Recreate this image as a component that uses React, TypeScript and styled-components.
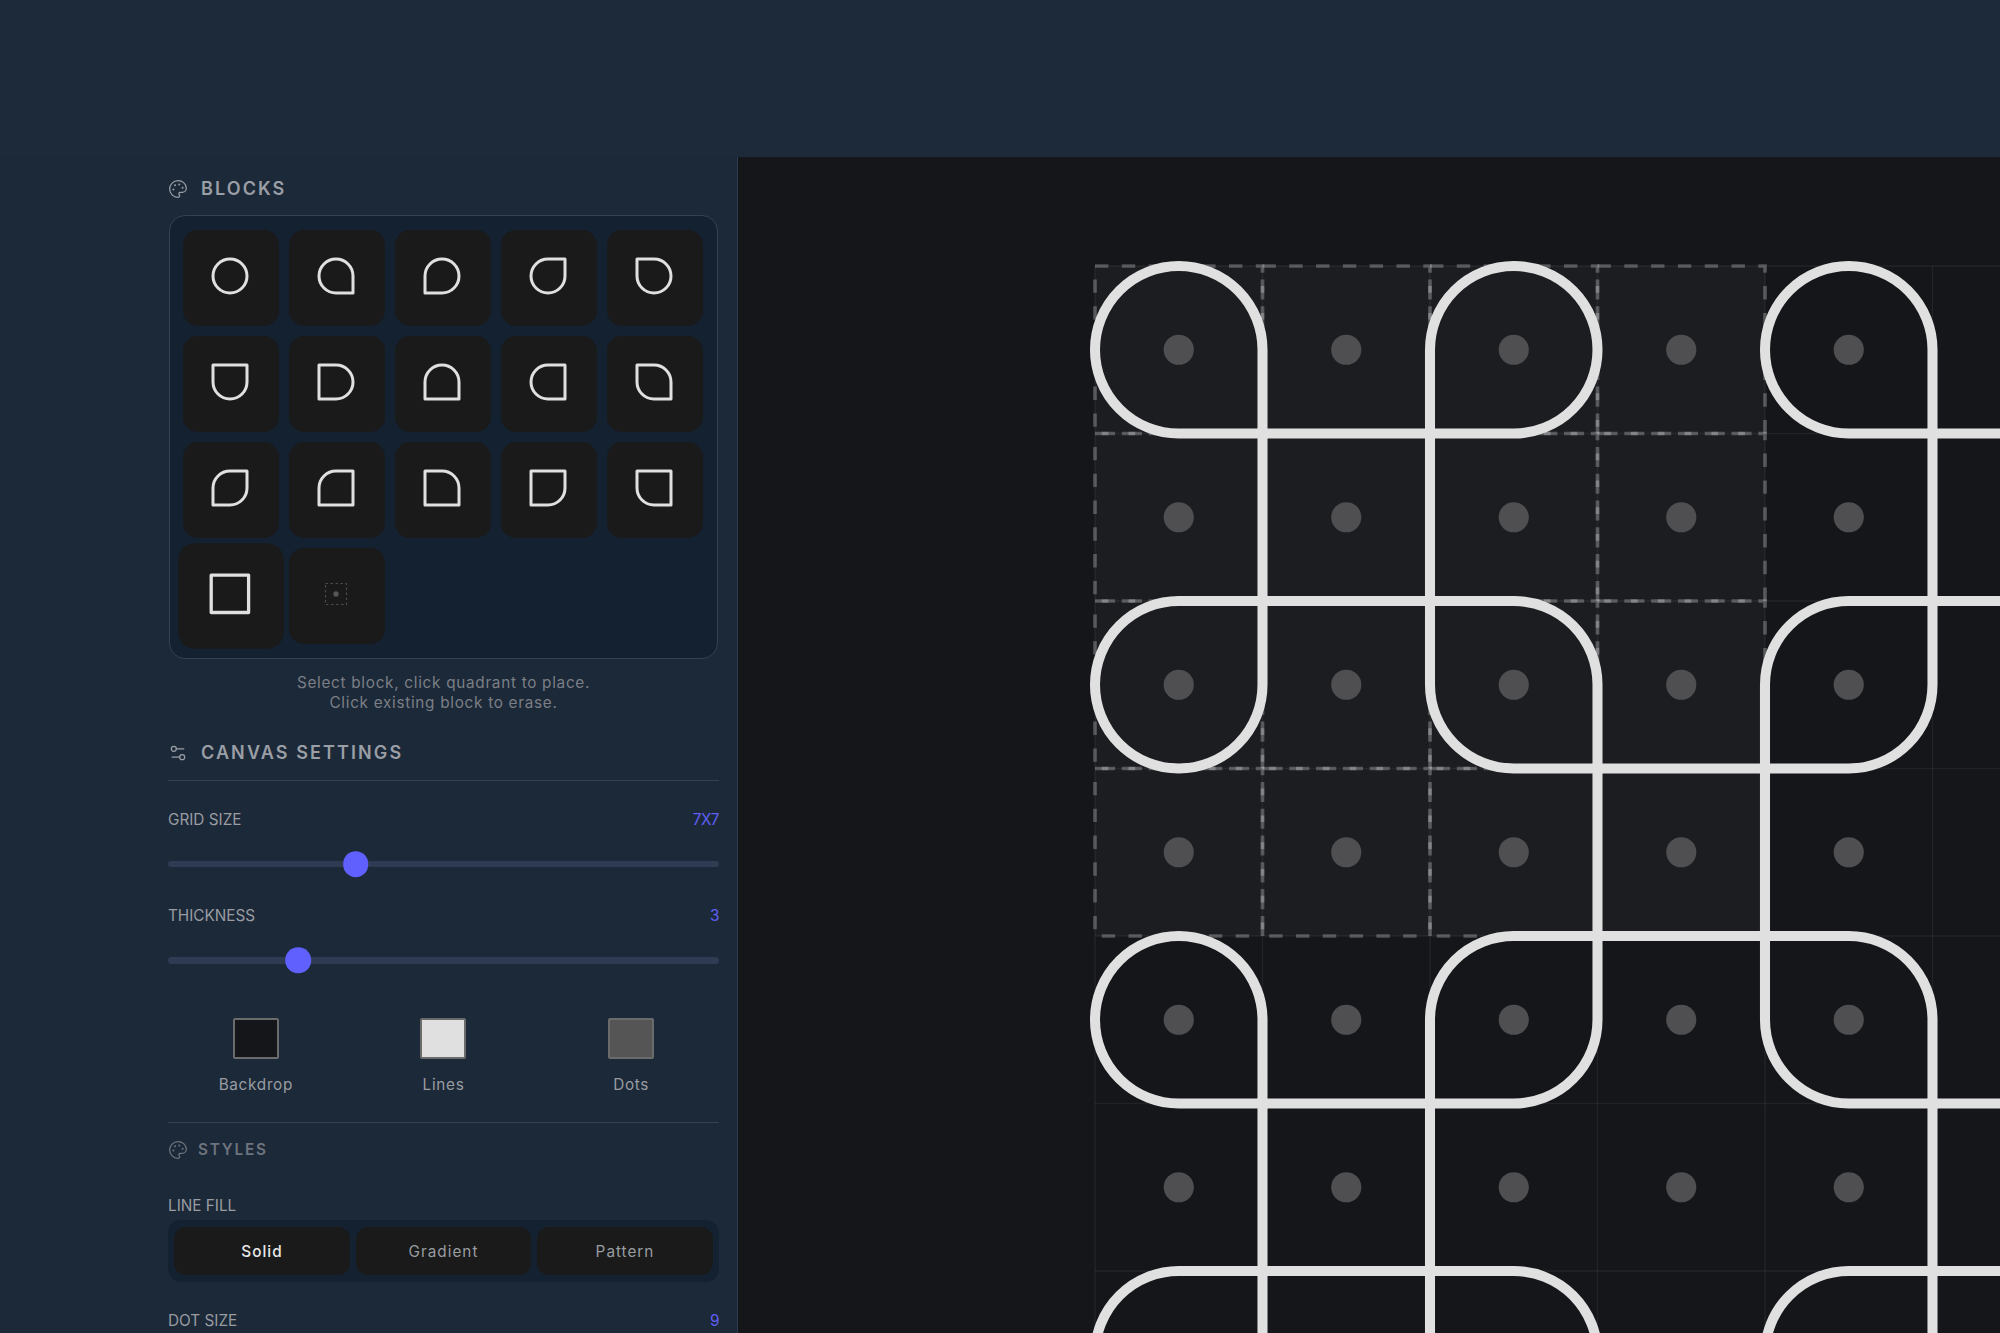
import React from 'react';
import styled, { createGlobalStyle } from 'styled-components';
import { Palette, Settings2 } from 'lucide-react';

// corners are written as top-left, top-right, bottom-right, bottom-left
const paletteShapes = [
  '1111', '1101', '1110', '1011', '0111',
  '0011', '0110', '1100', '1001', '0101',
  '1010', '1000', '0100', '0010', '0001',
];

const placedBlocks = [
  { col: 0, row: 0, corners: '1101' },
  { col: 2, row: 0, corners: '1110' },
  { col: 4, row: 0, corners: '1101' },
  { col: 1, row: 1, corners: '0000' },
  { col: 5, row: 1, corners: '0000' },
  { col: 0, row: 2, corners: '1011' },
  { col: 2, row: 2, corners: '0101' },
  { col: 4, row: 2, corners: '1010' },
  { col: 3, row: 3, corners: '0000' },
  { col: 0, row: 4, corners: '1101' },
  { col: 2, row: 4, corners: '1010' },
  { col: 4, row: 4, corners: '0101' },
  { col: 1, row: 5, corners: '0000' },
  { col: 5, row: 5, corners: '0000' },
  { col: 0, row: 6, corners: '1011' },
  { col: 2, row: 6, corners: '0101' },
  { col: 4, row: 6, corners: '1010' },
];

const GRID = 7;
const UNIT = 10;
const range = (n: number) => Array.from({ length: n }, (_, i) => i);

function cornerPath(x: number, y: number, s: number, corners: string) {
  const r = s / 2;
  const [tl, tr, br, bl] = corners.split('').map((c) => c === '1');
  return [
    `M${x + (tl ? r : 0)} ${y}`,
    `H${x + s - (tr ? r : 0)}`,
    tr ? `A${r} ${r} 0 0 1 ${x + s} ${y + r}` : '',
    `V${y + s - (br ? r : 0)}`,
    br ? `A${r} ${r} 0 0 1 ${x + s - r} ${y + s}` : '',
    `H${x + (bl ? r : 0)}`,
    bl ? `A${r} ${r} 0 0 1 ${x} ${y + s - r}` : '',
    `V${y + (tl ? r : 0)}`,
    tl ? `A${r} ${r} 0 0 1 ${x + r} ${y}` : '',
    'Z',
  ].join(' ');
}

const GlobalStyle = createGlobalStyle`
  html, body {
    margin: 0;
    height: 1333px;
    overflow: hidden;
    background: #1c2a3a;
    font-family: Inter, "Liberation Sans", sans-serif;
  }
`;

const Page = styled.div`
  display: flex;
  flex-direction: column;
  height: 1333px;
`;

const TopBar = styled.div`
  height: 157px;
  flex-shrink: 0;
  background: #1c2a3a;
`;

const Main = styled.div`
  display: flex;
  flex: 1;
  min-height: 0;
`;

const Sidebar = styled.aside`
  width: 738px;
  box-sizing: border-box;
  flex-shrink: 0;
  padding: 22px 18px 0 168px;
  background: #1c2939;
  border-right: 1.5px solid #2b3a4e;
  overflow: hidden;
`;

const SectionHead = styled.div<{ $ruled?: boolean; $spaced?: boolean }>`
  display: flex;
  align-items: center;
  gap: 13px;
  height: 20px;
  color: #9a9ea5;
  margin-top: ${({ $spaced }) => ($spaced ? '29px' : 0)};
  padding-bottom: ${({ $ruled }) => ($ruled ? '17px' : 0)};
  border-bottom: ${({ $ruled }) => ($ruled ? '1.3px solid #334155' : 'none')};
  svg {
    flex-shrink: 0;
  }
`;

const SectionTitle = styled.h2`
  margin: 0;
  font-size: 18px;
  line-height: 20px;
  font-weight: 600;
  letter-spacing: 2.1px;
  text-transform: uppercase;
`;

const MinorHead = styled.div`
  display: flex;
  align-items: center;
  gap: 10px;
  height: 20px;
  margin-top: 17px;
  color: #6e747d;
`;

const MinorTitle = styled.h3`
  margin: 0;
  font-size: 15.3px;
  line-height: 20px;
  font-weight: 600;
  letter-spacing: 1.8px;
  text-transform: uppercase;
`;

const BlockPanel = styled.div`
  margin: 16px 1.5px 0 0.5px;
  box-sizing: border-box;
  height: 444px;
  padding: 14px 13.5px;
  border: 1.3px solid #334155;
  border-radius: 16px;
  background: #142130;
`;

const BlockGrid = styled.div`
  display: grid;
  grid-template-columns: repeat(5, 96px);
  grid-auto-rows: 96px;
  gap: 10.1px;
`;

const BlockCell = styled.button<{ $selected?: boolean }>`
  display: flex;
  align-items: center;
  justify-content: center;
  padding: 0 3px 5px 0;
  border: none;
  border-radius: 15px;
  background: #1a1a1a;
  transform: ${({ $selected }) => ($selected ? 'scale(1.1)' : 'none')};
`;

const Hint = styled.p`
  margin: 14px 0 0;
  font-size: 15.3px;
  line-height: 20.4px;
  letter-spacing: 0.71px;
  text-align: center;
  color: #7b7f85;
`;

const FieldRow = styled.div<{ $gap?: string }>`
  display: flex;
  justify-content: space-between;
  margin-top: ${({ $gap }) => $gap ?? '29px'};
  font-size: 15.3px;
  line-height: 20.4px;
  text-transform: uppercase;
`;

const FieldLabel = styled.span`
  color: #999ca1;
`;

const FieldValue = styled.span`
  color: #6060f5;
  letter-spacing: -0.5px;
`;

const Slider = styled.div`
  position: relative;
  height: 6.4px;
  margin: 30.6px 0 9.6px;
  border-radius: 4px;
  background: #2f3b52;
`;

const Thumb = styled.span`
  position: absolute;
  top: 50%;
  width: 25.6px;
  height: 25.6px;
  border-radius: 50%;
  background: #6060ff;
  transform: translate(-50%, -50%);
`;

const Swatches = styled.div`
  display: grid;
  grid-template-columns: repeat(3, 1fr);
  gap: 12px;
  margin-top: 54px;
`;

const SwatchItem = styled.div`
  display: flex;
  flex-direction: column;
  align-items: center;
  gap: 16px;
  font-size: 15.3px;
  line-height: 20.4px;
  letter-spacing: 0.7px;
  color: #999ca1;
`;

const Swatch = styled.span<{ $color: string }>`
  box-sizing: border-box;
  width: 46px;
  height: 41px;
  border: 2.5px solid #6b6b6b;
  border-radius: 2px;
  background: ${({ $color }) => $color};
`;

const Divider = styled.hr`
  margin: 27px 0 0;
  border: none;
  border-top: 1.3px solid #334155;
`;

const Segmented = styled.div`
  display: grid;
  grid-template-columns: repeat(3, 1fr);
  gap: 6.4px;
  margin-top: 4px;
  padding: 6.4px;
  border-radius: 13px;
  background: #142130;
`;

const Segment = styled.button<{ $active?: boolean }>`
  height: 48.5px;
  border: none;
  border-radius: 12px;
  background: #1a1a1a;
  font-family: inherit;
  font-size: 15.3px;
  letter-spacing: 1px;
  font-weight: ${({ $active }) => ($active ? 500 : 400)};
  color: ${({ $active }) => ($active ? '#e8e8e8' : '#999ca1')};
`;

const Canvas = styled.main`
  flex: 1;
  min-width: 0;
  padding: 109.3px 0 0 356.6px;
  background: #14161a;
  overflow: hidden;
`;

const Board = styled.svg`
  display: block;
  width: 1172.5px;
  height: 1172.5px;
  overflow: visible;
`;

function BlockIcon({ corners }: { corners: string }) {
  return (
    <svg width="40" height="40" viewBox="0 0 40 40" fill="none">
      <path d={cornerPath(3, 3, 34, corners)} stroke="#e0e0e0" strokeWidth="3" strokeLinejoin="round" />
    </svg>
  );
}

function EmptyIcon() {
  return (
    <svg width="40" height="40" viewBox="0 0 40 40" fill="none">
      <rect x="9.5" y="9.5" width="21" height="21" stroke="#4a4a4a" strokeWidth="1.2" strokeDasharray="2.5 2.5" />
      <circle cx="20" cy="20" r="2.7" fill="#555" />
    </svg>
  );
}

function PatternBoard() {
  return (
    <Board viewBox={`0 0 ${GRID * UNIT} ${GRID * UNIT}`} fill="none">
      {range(GRID + 1).map((i) => (
        <g key={i} stroke="rgba(255,255,255,0.06)" strokeWidth="0.08">
          <line x1={i * UNIT} y1="0" x2={i * UNIT} y2={GRID * UNIT} />
          <line x1="0" y1={i * UNIT} x2={GRID * UNIT} y2={i * UNIT} />
        </g>
      ))}
      {range(4).map((row) =>
        range(4).map((col) => (
          <rect
            key={`${col}-${row}`}
            x={col * UNIT}
            y={row * UNIT}
            width={UNIT}
            height={UNIT}
            fill="rgba(255,255,255,0.03)"
            stroke="rgba(255,255,255,0.25)"
            strokeWidth="0.22"
            strokeDasharray="0.8 0.8"
          />
        )),
      )}
      {range(GRID).map((row) =>
        range(GRID).map((col) => (
          <circle key={`${col}-${row}`} cx={(col + 0.5) * UNIT} cy={(row + 0.5) * UNIT} r="0.9" fill="#4f4f51" />
        )),
      )}
      {placedBlocks.map(({ col, row, corners }) => (
        <path
          key={`${col}-${row}`}
          d={cornerPath(col * UNIT, row * UNIT, UNIT, corners)}
          stroke="#e0e0e0"
          strokeWidth="0.6"
        />
      ))}
    </Board>
  );
}

function SliderField({ label, value, percent, gap }: { label: string; value: string; percent: number; gap?: string }) {
  return (
    <>
      <FieldRow $gap={gap}>
        <FieldLabel>{label}</FieldLabel>
        <FieldValue>{value}</FieldValue>
      </FieldRow>
      <Slider>
        <Thumb style={{ left: `${percent}%` }} />
      </Slider>
    </>
  );
}

export default function App() {
  return (
    <Page>
      <GlobalStyle />
      <TopBar />
      <Main>
        <Sidebar>
          <SectionHead>
            <Palette size={20} strokeWidth={1.5} />
            <SectionTitle>Blocks</SectionTitle>
          </SectionHead>
          <BlockPanel>
            <BlockGrid>
              {paletteShapes.map((corners) => (
                <BlockCell key={corners}>
                  <BlockIcon corners={corners} />
                </BlockCell>
              ))}
              <BlockCell $selected>
                <BlockIcon corners="0000" />
              </BlockCell>
              <BlockCell>
                <EmptyIcon />
              </BlockCell>
            </BlockGrid>
          </BlockPanel>
          <Hint>
            Select block, click quadrant to place.
            <br />
            Click existing block to erase.
          </Hint>

          <SectionHead $ruled $spaced>
            <Settings2 size={20} strokeWidth={1.5} />
            <SectionTitle>Canvas Settings</SectionTitle>
          </SectionHead>
          <SliderField label="Grid Size" value="7X7" percent={34.1} />
          <SliderField label="Thickness" value="3" percent={23.6} gap="39px" />
          <Swatches>
            <SwatchItem>
              <Swatch $color="#14161a" />
              Backdrop
            </SwatchItem>
            <SwatchItem>
              <Swatch $color="#e0e0e0" />
              Lines
            </SwatchItem>
            <SwatchItem>
              <Swatch $color="#555555" />
              Dots
            </SwatchItem>
          </Swatches>
          <Divider />

          <MinorHead>
            <Palette size={20} strokeWidth={1.5} />
            <MinorTitle>Styles</MinorTitle>
          </MinorHead>
          <FieldRow $gap="36px">
            <FieldLabel>Line Fill</FieldLabel>
          </FieldRow>
          <Segmented>
            <Segment $active>Solid</Segment>
            <Segment>Gradient</Segment>
            <Segment>Pattern</Segment>
          </Segmented>
          <FieldRow>
            <FieldLabel>Dot Size</FieldLabel>
            <FieldValue>9</FieldValue>
          </FieldRow>
        </Sidebar>
        <Canvas>
          <PatternBoard />
        </Canvas>
      </Main>
    </Page>
  );
}
